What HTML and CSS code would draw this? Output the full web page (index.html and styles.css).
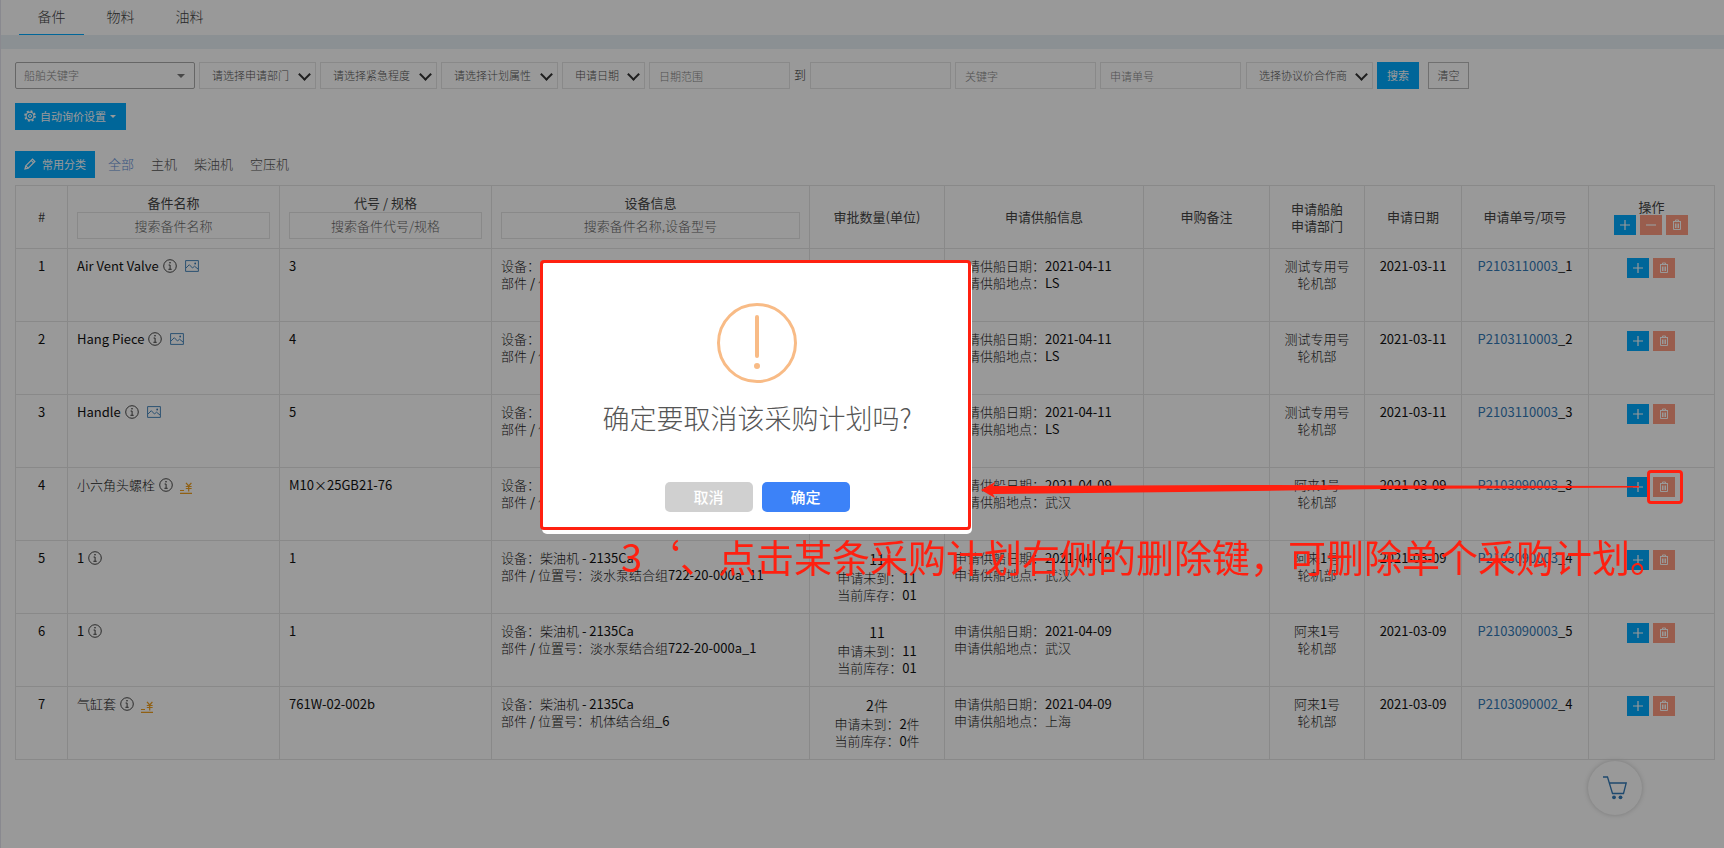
FILE: index.html
```
<!DOCTYPE html>
<html lang="zh-CN">
<head>
<meta charset="utf-8">
<title>采购计划</title>
<link rel="stylesheet" href="styles.css">
</head>
<body>
<svg class="defs" aria-hidden="true">
  <symbol id="i-plus" viewBox="0 0 12 12"><path d="M6 1v10M1 6h10" fill="none" stroke="currentColor" stroke-width="1.2"/></symbol>
  <symbol id="i-minus" viewBox="0 0 12 12"><path d="M1 6h10" fill="none" stroke="currentColor" stroke-width="1.2"/></symbol>
  <symbol id="i-trash" viewBox="0 0 12 12"><path d="M2 2.500h8M4.500 2.500V1h3v1.500M2.500 2.500v8h7v-8M4.500 4.500v4.500M6 4.500v4.500M7.500 4.500v4.500" fill="none" stroke="currentColor"/></symbol>
  <symbol id="i-info" viewBox="0 0 14 14"><circle cx="7" cy="7" r="6.300" fill="none" stroke="currentColor" stroke-width="0.9"/><path d="M5.600 6h1.500v4.300M5.400 10.300h3.300" fill="none" stroke="currentColor" stroke-width="0.9"/><circle cx="7" cy="3.800" r=".8" fill="currentColor"/></symbol>
  <symbol id="i-img" viewBox="0 0 14 12"><path d="M.6.6h12.800v10.800H.6zM1 8l3.300-3.300L7.500 8l2-1.800L13 9" fill="none" stroke="currentColor" stroke-width="0.9"/><circle cx="10.200" cy="3.500" r=".9" fill="currentColor"/></symbol>
  <symbol id="i-price" viewBox="0 0 12 12"><path d="M0 11.400h12M0 8.500h4" fill="none" stroke="currentColor" stroke-width="1.200"/><path d="M6 .8l2.700 3.200L11.400.8M5.800 4.500h5.800M5.800 6.500h5.800M8.700 4v5.500" fill="none" stroke="currentColor" stroke-width="1.200"/></symbol>
</svg>

<div class="page">
  <nav class="tabs">
    <a class="tab tab-active" href="#">备件</a>
    <a class="tab" href="#">物料</a>
    <a class="tab" href="#">油料</a>
  </nav>

  <main class="panel">
    <form class="filters">
      <button type="button" class="combo">船舶关键字<span class="caret"></span></button>
      <span class="pick pick-m"><select aria-label="申请部门"><option>请选择申请部门</option></select></span>
      <span class="pick pick-m"><select aria-label="紧急程度"><option>请选择紧急程度</option></select></span>
      <span class="pick pick-m"><select aria-label="计划属性"><option>请选择计划属性</option></select></span>
      <span class="pick pick-s"><select aria-label="日期类型"><option>申请日期</option></select></span>
      <input class="field" type="text" placeholder="日期范围" aria-label="开始日期">
      <span class="to">到</span>
      <input class="field" type="text" aria-label="结束日期">
      <input class="field" type="text" placeholder="关键字" aria-label="关键字">
      <input class="field" type="text" placeholder="申请单号" aria-label="申请单号">
      <span class="pick pick-l"><select aria-label="协议价合作商"><option>选择协议价合作商</option></select></span>
      <button type="button" class="btn btn-search">搜索</button>
      <button type="button" class="btn btn-clear">清空</button>
    </form>

    <button type="button" class="btn btn-auto">
      <svg class="ico12" viewBox="0 0 12 12"><circle cx="6" cy="6" r="5" fill="none" stroke="currentColor" stroke-width="1.600" stroke-dasharray="1.960 1.967"/><circle cx="6" cy="6" r="3.900" fill="none" stroke="currentColor" stroke-width="1.100"/><circle cx="6" cy="6" r="1.500" fill="none" stroke="currentColor"/></svg>
      自动询价设置<span class="caret caret-light"></span>
    </button>

    <div class="cats">
      <button type="button" class="btn btn-cat">
        <svg class="ico12" viewBox="0 0 12 12"><path d="M1 11l.8-3.200L8.500 1.100l2.400 2.400-6.700 6.700zM7.200 2.400l2.400 2.400M1.800 7.800l2.400 2.400" fill="none" stroke="currentColor" stroke-width="1.200"/></svg>
        常用分类
      </button>
      <a class="cat cat-on" href="#">全部</a>
      <a class="cat" href="#">主机</a>
      <a class="cat" href="#">柴油机</a>
      <a class="cat" href="#">空压机</a>
    </div>

    <table class="grid">
      <colgroup>
        <col class="c-no"><col class="c-name"><col class="c-name"><col class="c-dev"><col class="c-qty"><col class="c-sup"><col class="c-act"><col class="c-ship"><col class="c-date"><col class="c-code"><col class="c-act">
      </colgroup>
      <thead>
        <tr>
          <th>#</th>
          <th>备件名称<input class="search" type="text" placeholder="搜索备件名称" aria-label="搜索备件名称"></th>
          <th>代号 / 规格<input class="search" type="text" placeholder="搜索备件代号/规格" aria-label="搜索备件代号/规格"></th>
          <th>设备信息<input class="search" type="text" placeholder="搜索备件名称,设备型号" aria-label="搜索设备"></th>
          <th>审批数量(单位)</th>
          <th>申请供船信息</th>
          <th>申购备注</th>
          <th>申请船舶<br>申请部门</th>
          <th>申请日期</th>
          <th>申请单号/项号</th>
          <th>操作<div class="ops"><button type="button" class="op op-add" aria-label="全部添加"><svg><use href="#i-plus"/></svg></button><button type="button" class="op op-del" aria-label="全部移除"><svg><use href="#i-minus"/></svg></button><button type="button" class="op op-del" aria-label="全部删除"><svg><use href="#i-trash"/></svg></button></div></th>
        </tr>
      </thead>
      <tbody id="rows"></tbody>
    </table>
  </main>
</div>

<a class="cart" href="#" aria-label="购物车">
  <svg viewBox="0 0 24 24"><path d="M0 1h4.500l5 16.500h11L23.200 7H6.300" fill="none" stroke="currentColor" stroke-width="1.300"/><circle cx="11" cy="21.300" r="1.900" fill="currentColor"/><circle cx="17.500" cy="21.300" r="1.900" fill="currentColor"/></svg>
</a>

<div class="mask">
  <div class="dialog" role="dialog" aria-labelledby="ask">
    <div class="warn"><span class="warn-bar"></span><span class="warn-dot"></span></div>
    <h2 class="ask" id="ask">确定要取消该采购计划吗?</h2>
    <div class="answers">
      <button type="button" class="answer answer-no">取消</button>
      <button type="button" class="answer answer-yes">确定</button>
    </div>
  </div>
</div>

<div class="notes">
  <div class="frame frame-dialog"></div>
  <div class="frame frame-trash"></div>
  <svg class="arrow" viewBox="0 0 660 18"><path d="M0 9l14-8-2 4 240-1 406 1v1.500L400 8l-200 3-188 2 2 4z" fill="currentColor"/></svg>
  <p class="tip">3‘、点击某条采购计划右侧的删除键，可删除单个采购计划。</p>
</div>
<script src="rows.js"></script>
</body>
</html>
```
FILE: rows.js
```
const rows = [
  ["Air Vent Valve", "img", "3", "Lub Oil Pump", "Cover", "2件", "2件", "0件", "2021-04-11", "LS", "测试专用号", "2021-03-11", "P2103110003", 1],
  ["Hang Piece", "img", "4", "Lub Oil Pump", "Cover", "2件", "2件", "0件", "2021-04-11", "LS", "测试专用号", "2021-03-11", "P2103110003", 2],
  ["Handle", "img", "5", "Lub Oil Pump", "Cover", "2件", "2件", "0件", "2021-04-11", "LS", "测试专用号", "2021-03-11", "P2103110003", 3],
  ["小六角头螺栓", "price", "M10×25GB21-76", "柴油机 - 2135Ca", "机体结合组", "2件", "2件", "0件", "2021-04-09", "武汉", "阿来1号", "2021-03-09", "P2103090003", 3],
  ["1", "", "1", "柴油机 - 2135Ca", "淡水泵结合组722-20-000a_11", "11", "11", "01", "2021-04-09", "武汉", "阿来1号", "2021-03-09", "P2103090003", 4],
  ["1", "", "1", "柴油机 - 2135Ca", "淡水泵结合组722-20-000a_1", "11", "11", "01", "2021-04-09", "武汉", "阿来1号", "2021-03-09", "P2103090003", 5],
  ["气缸套", "price", "761W-02-002b", "柴油机 - 2135Ca", "机体结合组_6", "2件", "2件", "0件", "2021-04-09", "上海", "阿来1号", "2021-03-09", "P2103090002", 4]
];

// Chinese runs are set in the light weight, Latin and digits in the regular one.
const t = s => String(s).replace(/[\u4e00-\u9fff：]+/g, '<span class="soft">$&</span>');

document.getElementById("rows").innerHTML = rows.map((r, i) => `
  <tr>
    <td class="mid">${i + 1}</td>
    <td>${t(r[0])} <svg class="mark mark-info"><use href="#i-info"/></svg>${r[1] ? `<svg class="mark mark-${r[1]}"><use href="#i-${r[1]}"/></svg>` : ""}</td>
    <td>${r[2]}</td>
    <td>${t("设备：" + r[3])}<br>${t("部件 / 位置号：" + r[4])}</td>
    <td class="mid"><div class="qty">${t(r[5])}</div>${t("申请未到：" + r[6])}<br>${t("当前库存：" + r[7])}</td>
    <td>${t("申请供船日期：" + r[8])}<br>${t("申请供船地点：" + r[9])}</td>
    <td></td>
    <td class="mid">${t(r[10])}<br>${t("轮机部")}</td>
    <td class="mid">${r[11]}</td>
    <td class="mid"><a class="code" href="#">${r[12]}</a>_${r[13]}</td>
    <td class="mid"><div class="ops"><button type="button" class="op op-add" aria-label="添加"><svg><use href="#i-plus"/></svg></button><button type="button" class="op op-del" aria-label="删除"><svg><use href="#i-trash"/></svg></button></div></td>
  </tr>`).join("");
```
FILE: styles.css
```
* { box-sizing: border-box; }

body {
  margin: 0;
  background: #fff;
  color: #111;
  font: 300 13px/17px "Noto Sans CJK SC", sans-serif;
}

button, input, select {
  margin: 0;
  font: inherit;
  color: inherit;
  border-radius: 0;
}

a { color: inherit; text-decoration: none; }

.defs { position: absolute; width: 0; height: 0; }

.page {
  min-height: 100vh;
  border-left: 1px solid #e4e4ee;
}

.tabs {
  display: flex;
  gap: 4px;
  height: 35px;
  padding-left: 18px;
}

.tab {
  width: 65px;
  text-align: center;
  font-size: 14px;
  line-height: 33px;
  color: #444;
}

.tab-active { border-bottom: 1px solid #00aaff; }

.panel {
  border-top: 14px solid #e8f0f5;
  padding: 13px 9px 0 14px;
}

.filters {
  display: flex;
  align-items: center;
  gap: 4px;
  font-size: 11px;
  color: #555;
}

.combo {
  display: flex;
  align-items: center;
  justify-content: space-between;
  width: 180px;
  height: 27px;
  padding: 0 9px 0 8px;
  border: 1px solid #aaa;
  border-radius: 2px;
  background: #fff;
  color: #888;
}

.caret {
  border: 4px solid transparent;
  border-top-color: #777;
  border-bottom: 0;
}

.caret-light { border-width: 3px; border-top-color: #fff; border-bottom: 0; }

.pick { position: relative; height: 27px; }
.pick-m { width: 117px; }
.pick-s { width: 83px; }
.pick-l { width: 127px; margin-left: 1px; }

.pick select {
  width: 100%;
  height: 27px;
  padding: 0 12px;
  border: 1px solid #e4e4e4;
  background: #fff;
  appearance: none;
}

.pick::after {
  content: "";
  position: absolute;
  top: 8px;
  right: 7px;
  width: 7px;
  height: 7px;
  border: solid #333;
  border-width: 0 2px 2px 0;
  transform: rotate(45deg);
}

.field {
  width: 141px;
  height: 27px;
  padding: 0 9px;
  border: 1px solid #e4e4e4;
  background: #fff;
}

.field::placeholder { color: #888; }

.to { padding-bottom: 2px; font-size: 12px; color: #333; }

.btn {
  height: 27px;
  padding: 0 9px 1px;
  border: 0;
  background: #00aaff;
  color: #fff;
  font-size: 11px;
  font-weight: 400;
  white-space: nowrap;
}

.btn-search { width: 42px; }

.btn-clear {
  width: 41px;
  margin-left: 5px;
  padding: 0;
  border: 1px solid #bbb;
  background: #fff;
  color: #555;
  font-weight: 300;
}

.btn-auto, .btn-cat {
  display: flex;
  align-items: center;
}

.btn-auto { width: 111px; gap: 4px; margin-top: 14px; }
.btn-cat { width: 80px; gap: 6px; margin-right: -4px; }

.ico12 { width: 12px; height: 12px; flex: none; }

.cats {
  display: flex;
  align-items: center;
  gap: 17px;
  margin: 21px 0 7px;
}

.cat { padding-bottom: 3px; color: #555; }
.cat-on { color: #5f8fd8; }

.grid {
  width: 100%;
  border-collapse: collapse;
  table-layout: fixed;
}

.c-no { width: 52px; }
.c-name { width: 212px; }
.c-dev { width: 318px; }
.c-qty { width: 135px; }
.c-sup { width: 199px; }
.c-act { width: 126px; }
.c-ship { width: 95px; }
.c-date { width: 97px; }
.c-code { width: 127px; }

.grid th, .grid td {
  padding: 8px 9px 10px;
  border: 1px solid #e4e4e4;
  font-weight: 400;
}

.grid th { padding-bottom: 9px; color: #444; }
.grid td { vertical-align: top; }
.mid { text-align: center; }
.soft { font-weight: 300; color: #222; }
.code { color: #337ab7; }

.search {
  display: block;
  width: 100%;
  height: 27px;
  margin-top: 1px;
  padding: 0 9px;
  border: 1px solid #e4e4e4;
  background: #fff;
  font-weight: 300;
  text-align: center;
}

.search::placeholder { color: #666; }

.qty { font-size: 14px; line-height: 20px; }

.mark { height: 14px; vertical-align: -2px; }
.mark-info { width: 14px; margin-left: 1px; color: #333; }
.mark-img { width: 14px; height: 12px; margin-left: 8px; vertical-align: -1px; color: #337ab7; }
.mark-price { width: 12px; height: 12px; margin-left: 7px; vertical-align: -4px; color: #f0a020; }

.ops { display: flex; justify-content: center; gap: 4px; padding-right: 2px; }
td .ops { margin-top: 1px; }

.op {
  display: flex;
  align-items: center;
  justify-content: center;
  width: 22px;
  height: 20px;
  padding: 0;
  border: 0;
  color: #fff;
}

.op svg { width: 12px; height: 12px; }
.op-add { background: #00aaff; }
.op-del { background: #ff9c80; }

.cart {
  position: fixed;
  right: 82px;
  bottom: 33px;
  display: flex;
  align-items: center;
  justify-content: center;
  width: 54px;
  height: 54px;
  border-radius: 50%;
  background: #fff;
  box-shadow: 0 0 5px #ccc;
  color: #337ab7;
}

.cart svg { width: 24px; height: 24px; }

.mask {
  position: fixed;
  inset: 0;
  display: flex;
  align-items: center;
  justify-content: center;
  padding-right: 210px;
  padding-bottom: 52px;
  background: rgba(0, 0, 0, 0.4);
}

.dialog {
  display: flex;
  flex-direction: column;
  align-items: center;
  width: 430px;
  padding: 41px 20px 22px;
  border-radius: 5px;
  background: #fff;
}

.warn {
  display: flex;
  flex-direction: column;
  align-items: center;
  gap: 5px;
  width: 80px;
  height: 80px;
  padding-top: 9px;
  border: 3px solid #f8bb86;
  border-radius: 50%;
}

.warn-bar { width: 4px; height: 43px; border-radius: 2px; background: #f8bb86; }
.warn-dot { width: 6px; height: 6px; border-radius: 50%; background: #f8bb86; }

.ask {
  margin: 15px 0 44px;
  font-size: 27px;
  line-height: 40px;
  font-weight: 300;
  color: #555;
}

.answers { display: flex; gap: 9px; }

.answer {
  width: 88px;
  height: 30px;
  padding: 0 0 2px;
  border: 0;
  border-radius: 5px;
  color: #fff;
  font-size: 15px;
  font-weight: 500;
}

.answer-no { background: #d0d0d0; }
.answer-yes { background: #3c82f8; }

.notes {
  position: fixed;
  inset: 0;
  color: #ff2010;
  pointer-events: none;
}

.frame { position: absolute; border: 3px solid; border-radius: 4px; }
.frame-dialog { left: 540px; top: 260px; width: 431px; height: 270px; }
.frame-trash { left: 1647px; top: 470px; width: 36px; height: 34px; }

.arrow { position: absolute; left: 981px; top: 481px; width: 660px; height: 18px; }

.tip {
  position: absolute;
  left: 621px;
  top: 528px;
  margin: 0;
  font-size: 38px;
  line-height: 56px;
  font-weight: 400;
  white-space: nowrap;
}
```
